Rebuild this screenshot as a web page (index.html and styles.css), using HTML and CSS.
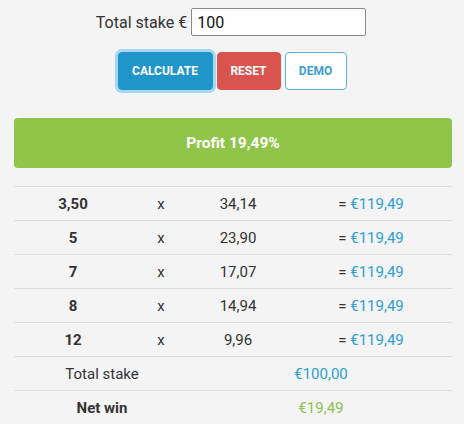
FILE: index.html
```html
<!DOCTYPE html>
<html>
<head>
<meta charset="utf-8">
<link rel="stylesheet" href="styles.css">
</head>
<body>
<div class="page">
  <div class="stake-row">
    <label class="stake-label" for="stake">Total stake €</label>
    <input id="stake" class="stake-input" type="text" value="100">
  </div>
  <div class="buttons">
    <button class="btn btn-calc">Calculate</button>
    <button class="btn btn-reset">Reset</button>
    <button class="btn btn-demo">Demo</button>
  </div>
  <div class="profit">Profit 19,49%</div>
  <table class="results">
    <colgroup>
      <col class="c1"><col class="c2"><col class="c3"><col class="c4">
    </colgroup>
    <tr><td class="odd">3,50</td><td>x</td><td>34,14</td><td class="res">= <span class="blue">€119,49</span></td></tr>
    <tr><td class="odd">5</td><td>x</td><td>23,90</td><td class="res">= <span class="blue">€119,49</span></td></tr>
    <tr><td class="odd">7</td><td>x</td><td>17,07</td><td class="res">= <span class="blue">€119,49</span></td></tr>
    <tr><td class="odd">8</td><td>x</td><td>14,94</td><td class="res">= <span class="blue">€119,49</span></td></tr>
    <tr><td class="odd">12</td><td>x</td><td>9,96</td><td class="res">= <span class="blue">€119,49</span></td></tr>
    <tr><td colspan="2">Total stake</td><td colspan="2" class="blue">€100,00</td></tr>
    <tr><td colspan="2" class="bold">Net win</td><td colspan="2" class="green">€19,49</td></tr>
  </table>
</div>
</body>
</html>
```
FILE: styles.css
```css
html, body {
  margin: 0;
  padding: 0;
  background: #f4f4f4;
}
body {
  font-family: Roboto, "Liberation Sans", sans-serif;
  color: #333;
}
.page {
  padding: 8px 12px 0 14px;
}
.stake-row {
  display: flex;
  justify-content: center;
  align-items: center;
  gap: 4px;
  padding-right: 4px;
}
.stake-label {
  font-size: 16px;
  color: #333;
}
.stake-input {
  box-sizing: border-box;
  width: 175px;
  height: 28px;
  border: 1px solid #8a8a8a;
  border-radius: 2px;
  background: #fff;
  font-family: Roboto, "Liberation Sans", sans-serif;
  font-size: 16px;
  color: #111;
  padding: 0 5px;
  margin: 0;
}
.buttons {
  display: flex;
  justify-content: center;
  gap: 4px;
  margin-top: 16px;
  padding-right: 2px;
}
.btn {
  box-sizing: border-box;
  height: 38px;
  border-radius: 4px;
  font-family: Roboto, "Liberation Sans", sans-serif;
  font-weight: bold;
  font-size: 12px;
  text-transform: uppercase;
  padding: 0;
  margin: 0;
}
.btn-calc {
  width: 95px;
  background: #1f95c9;
  color: #fff;
  border: 1px solid #1f95c9;
  box-shadow: 0 0 0 3px #a6d6f0;
}
.btn-reset {
  width: 64px;
  background: #d9534f;
  color: #fff;
  border: 1px solid #d9534f;
}
.btn-demo {
  width: 62px;
  background: #fff;
  color: #3a9fcf;
  border: 1px solid #5ab3d8;
}
.profit {
  margin-top: 28px;
  height: 50px;
  border-radius: 4px;
  background: #8fc549;
  color: #fff;
  font-weight: bold;
  font-size: 15.5px;
  display: flex;
  align-items: center;
  justify-content: center;
}
.results {
  width: 100%;
  margin-top: 18px;
  border-collapse: collapse;
  table-layout: fixed;
  font-size: 15px;
}
.c1 { width: 118px; }
.c2 { width: 58px; }
.c3 { width: 96px; }
.results td {
  height: 34px;
  padding: 0;
  text-align: center;
  border-top: 1px solid #ddd;
  box-sizing: border-box;
}
.results td.res {
  padding-left: 4px;
}
.odd, .bold {
  font-weight: bold;
}
.blue {
  color: #2d9fd2;
}
.green {
  color: #8cc152;
}
```
